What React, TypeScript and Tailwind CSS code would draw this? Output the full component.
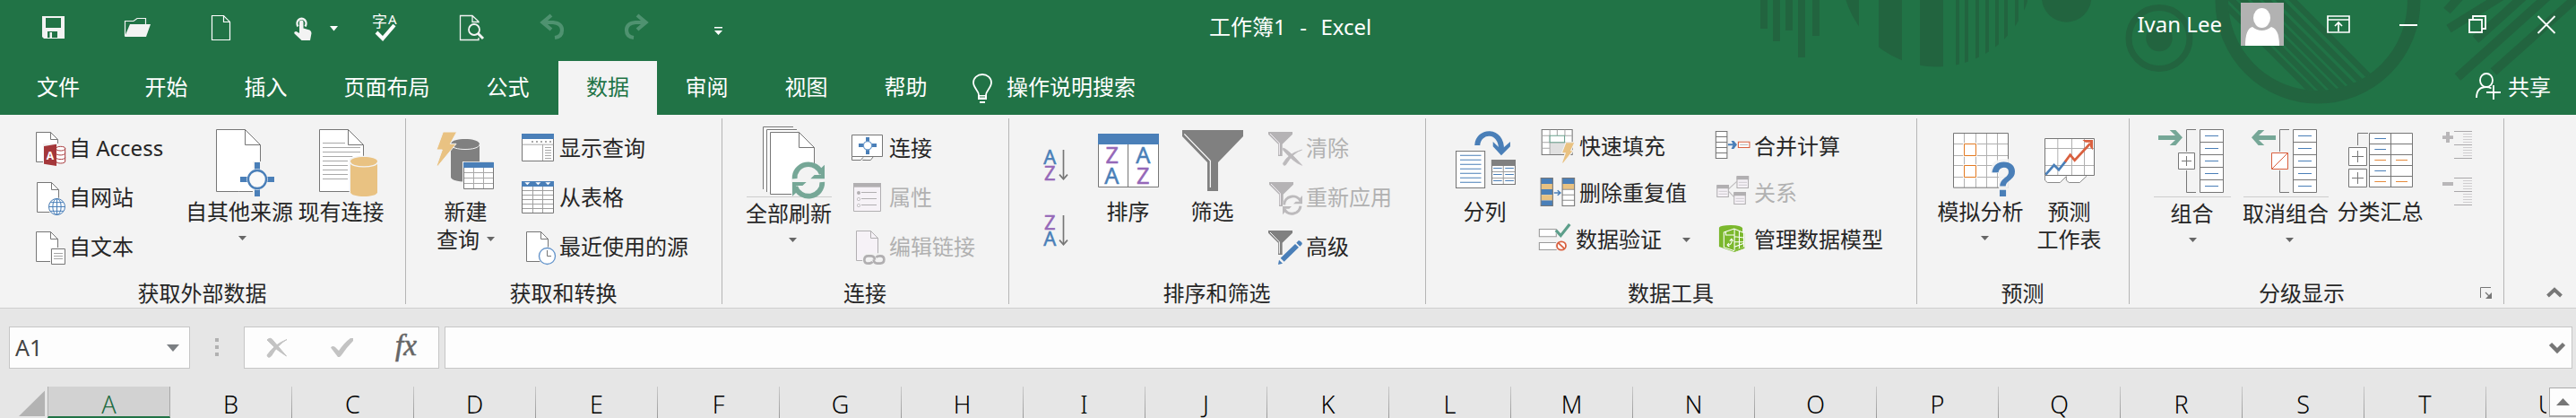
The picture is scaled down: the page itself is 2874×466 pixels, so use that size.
import type { ReactNode } from "react";

const BG = "#f3f3f3";
const GRAY = "#767676";
const BLUE = "#4a7fb8";
const TEAL = "#76a797";
const SAND = "#e9c282";
const RED = "#d9603f";
const DIM = "#b1afb1";

type IconProps = { vb: string; w: number; h: number; c?: string; children: ReactNode };

function Icon({ vb, w, h, c = "", children }: IconProps) {
  return (
    <svg viewBox={vb} width={w} height={h} preserveAspectRatio="none" fill="none" className={`shrink-0 overflow-visible ${c}`}>
      {children}
    </svg>
  );
}

type DocProps = { x: number; y: number; w: number; h: number; f: number; stroke?: string; fill?: string; sw?: number };

function Doc({ x, y, w, h, f, stroke = GRAY, fill = "#fff", sw = 3 }: DocProps) {
  return (
    <g stroke={stroke} strokeWidth={sw}>
      <path d={`M${x} ${y}H${x + w - f}L${x + w} ${y + f}V${y + h}H${x}Z`} fill={fill} />
      <path d={`M${x + w - f} ${y}V${y + f}H${x + w}`} />
    </g>
  );
}

function Caret({ c = "" }: { c?: string }) {
  return (
    <svg width="9" height="5" viewBox="0 0 9 5" className={`shrink-0 ${c}`}>
      <path d="M0 0H9L4.5 5Z" fill="#666" />
    </svg>
  );
}

function Group({ w, label, children, launcher }: { w: string; label: string; children: ReactNode; launcher?: boolean }) {
  return (
    <section className={`${w} flex shrink-0 flex-col`}>
      <div className="flex h-[183px] items-start">{children}</div>
      <div className="flex h-[31px] items-center">
        <div className="flex-1 pr-px text-center leading-[31px]">{label}</div>
        {launcher && (
          <Icon vb="0 0 13 13" w={13} h={13} c="mr-[13px] ml-[6px]">
            <path d="M.5 12V.5H12" stroke={GRAY} />
            <path d="M6 6L10 10" stroke={GRAY} strokeWidth="1.3" />
            <path d="M13 6V13H6Z" fill={GRAY} />
          </Icon>
        )}
      </div>
    </section>
  );
}

function Rule() {
  return <div className="mt-[4px] h-[207px] w-px shrink-0 bg-[#b5b5b5]" />;
}

function Big({ c, icon, label, second, caret, caretClass = "", split }: { c: string; icon: ReactNode; label: string; second?: ReactNode; caret?: boolean; caretClass?: string; split?: boolean }) {
  return (
    <div className={`${c} flex shrink-0 flex-col`}>
      <div className={split ? "mb-[2px] h-[92px] border-b border-[#cdcdcd]" : "h-[92px]"}>{icon}</div>
      <div className="-ml-px text-center leading-[31px] whitespace-nowrap">{label}</div>
      {second && <div className="-ml-px flex items-center justify-center leading-[31px] whitespace-nowrap">{second}</div>}
      {caret && <Caret c={`mx-auto mt-[12px] ${caretClass}`} />}
    </div>
  );
}

function Small({ icon, label, dim, h = "h-[55px] pb-px", gap = "gap-[3px]", caret }: { icon: ReactNode; label: string; dim?: boolean; h?: string; gap?: string; caret?: boolean }) {
  return (
    <div className={`flex items-center whitespace-nowrap ${h} ${gap} ${dim ? "text-[#b1b1b1]" : ""}`}>
      {icon}
      <span className="pb-px">{label}</span>
      {caret && <Caret c="ml-[22px]" />}
    </div>
  );
}

function Funnel({ fill, hi, children, vb }: { fill: string; hi: string; children: ReactNode; vb: string }) {
  return (
    <Icon vb={vb} w={38} h={37}>
      <path d="M885 57H966V65L932 98V138H918V98L885 65Z" fill={fill} />
      <path d="M891 63L922 95V134" stroke={hi} strokeWidth="3" />
      {children}
    </Icon>
  );
}

function Decor() {
  const diag = [0, 15, 29, 42, 55, 68, 81];
  const thin = [2182, 2192, 2204, 2215, 2226, 2236, 2248, 2258];
  return (
    <svg className="absolute top-0 left-[1900px]" width="974" height="128" viewBox="1900 0 974 128" fill="#22643f">
      <clipPath id="disc"><circle cx="2161" cy="-31.8" r="106.4" /></clipPath>
      <clipPath id="hole"><circle cx="2586" cy="1" r="100" /></clipPath>
      <path d="M1964 0h8v32h-8zM1978 0h8v46h-8zM1992 0h8v34h-8zM2006 0h8v64h-8zM2022 0h8v40h-8z" />
      <g clipPath="url(#disc)">
        <path d="M2050 0h24v80h-24zM2096 0h26v80h-26zM2142 0h26v80h-26z" />
        {thin.map((x) => <rect key={x} x={x} y="0" width="4" height="80" />)}
      </g>
      <circle cx="2305.6" cy="-3" r="27.7" />
      <circle cx="2409" cy="42.5" r="34" fill="none" stroke="#22643f" strokeWidth="7" />
      <circle cx="2409" cy="42.5" r="14.7" />
      <circle cx="2586" cy="1" r="107.2" fill="none" stroke="#22643f" strokeWidth="14.5" />
      <g clipPath="url(#hole)" stroke="#22643f" strokeWidth="6.5">
        {diag.map((d) => <path key={d} d={`M${2538 - d} -20l140 140`} />)}
      </g>
      <g stroke="#22643f" strokeWidth="10">
        <path d="M2750 -10L2730 12M2800 -10L2732 32M2822 -10L2762 44M2860 -20L2742 86M2894 -20L2782 80" />
      </g>
    </svg>
  );
}

function QuickAccess() {
  return (
    <div className="flex w-[1349px] shrink-0 items-start pt-[14px] pl-[47px]">
      <Icon vb="47 14 25 34" w={25} h={34}>
        <path fillRule="evenodd" d="M47 18H72V43H49L47 41ZM51 20V31H68V20ZM53 35V42H64V35ZM55.500 36H58V42H55.500Z" fill="#f3f3f3" />
      </Icon>
      <Icon vb="138 14 30 34" w={30} h={34} c="ml-[66px]">
        <path d="M139.500 40V23.500H149L153 20.500H162.500V27" stroke="#f3f3f3" strokeWidth="1.2" />
        <path d="M145 27H168L163 41H139Z" fill="#f3f3f3" />
      </Icon>
      <Icon vb="236 14 22 34" w={22} h={34} c="ml-[68px]">
        <Doc x={236.5} y={17.5} w={20} h={27} f={7} stroke="#fff" fill="none" sw={1.2} />
      </Icon>
      <Icon vb="328 14 20 34" w={20} h={34} c="ml-[70px]">
        <path d="M332.500 29.500A5 5.500 0 1 1 340.500 29.500" stroke="#f3f3f3" strokeWidth="2.400" />
        <path d="M334 37V24.500Q334 22.500 336.300 22.500T338.500 24.500V31.500L345.500 33.500Q347.500 34.500 347.500 37L346 45H336.500L328.500 37.500Q327.500 35 330.500 35Z" fill="#f3f3f3" />
      </Icon>
      <Icon vb="368 14 9 34" w={9} h={34} c="ml-[20px]"><path d="M368 29h9l-4.500 5.500Z" fill="#fff" /></Icon>
      <Icon vb="416 14 27 34" w={27} h={34} c="ml-[39px]">
        <text x="415" y="30" fontSize="17" fill="#fff">字</text>
        <text x="433" y="27" fontSize="15" fill="#fff">A</text>
        <path d="M420 36L427 43L440 28" stroke="#fff" strokeWidth="4" />
      </Icon>
      <Icon vb="513 14 27 34" w={27} h={34} c="ml-[70px]">
        <path d="M534 25.500V24L527 17.500H513.500V44.500H534V42M527 17.500V24.500H534" stroke="#f3f3f3" strokeWidth="1.300" />
        <circle cx="529" cy="33" r="6" stroke="#f3f3f3" strokeWidth="1.800" fill="#217346" />
        <path d="M533 37L539 43" stroke="#f3f3f3" strokeWidth="3" />
      </Icon>
      <Icon vb="603 14 26 34" w={26} h={34} c="ml-[63px]">
        <path d="M615 17L605.500 25L615 33M606 25H617Q627 26 627 33.500Q627 41 619 42" stroke="#4f9270" strokeWidth="4.200" />
      </Icon>
      <Icon vb="697 14 26 34" w={26} h={34} c="ml-[68px]">
        <path d="M711 17L720.500 25L711 33M720 25H709Q699 26 699 33.500Q699 41 707 42" stroke="#4f9270" strokeWidth="4.200" />
      </Icon>
      <Icon vb="797 14 9 34" w={9} h={34} c="ml-[74px]"><path d="M797 30h9v1.500h-9zM797 34h9l-4.500 5Z" fill="#fff" /></Icon>
    </div>
  );
}

function TitleBar() {
  return (
    <div className="relative flex h-[68px] items-start text-white">
      <QuickAccess />
      <div className="pt-[14px] leading-[32px] [word-spacing:1.500px] whitespace-pre">{"工作簿1  -  Excel"}</div>
      <div className="ml-auto flex items-start pr-[23px]">
        <div className="pt-[11px] leading-[32px]">Ivan Lee</div>
        <Icon vb="0 0 48 48" w={48} h={48} c="mt-[3px] ml-[21px]">
          <path d="M0 0H48V48H0Z" fill="#b2b2b2" />
          <ellipse cx="23.500" cy="17" rx="9.500" ry="11" fill="#fff" />
          <path d="M5 48Q5 29 13 27Q18 31 23.500 31Q29 31 34 27Q43 29 43 48Z" fill="#fff" />
        </Icon>
        <Icon vb="2596 14 26 34" w={26} h={34} c="mt-[14px] ml-[48px]">
          <path d="M2597 18H2621V36H2597ZM2597 22H2621M2609 35V25M2605 29L2609 25L2613 29" stroke="#fff" strokeWidth="1.700" />
        </Icon>
        <Icon vb="2677 14 20 34" w={20} h={34} c="mt-[14px] ml-[55px]"><path d="M2677 28h20" stroke="#fff" strokeWidth="2" /></Icon>
        <Icon vb="2754 14 20 34" w={20} h={34} c="mt-[14px] ml-[57px]">
          <path d="M2755 22H2769V36H2755ZM2759 22V18H2773V32H2769" stroke="#fff" strokeWidth="1.800" />
        </Icon>
        <Icon vb="2831 14 20 34" w={20} h={34} c="mt-[14px] ml-[57px]"><path d="M2831.500 18L2850.500 37M2850.500 18L2831.500 37" stroke="#fff" strokeWidth="1.800" /></Icon>
      </div>
    </div>
  );
}

function Tabs() {
  const tabs = ["开始", "插入", "页面布局", "公式", "数据", "审阅", "视图", "帮助"];
  return (
    <div className="relative flex h-[60px] items-stretch leading-[58px] text-white">
      <div className="w-[131px] shrink-0 pr-px text-center">文件</div>
      <div className="flex gap-px">
        {tabs.map((t) => (
          <div key={t} className={t === "数据" ? "bg-[#f3f3f3] px-[31px] text-[#217346]" : "pr-[31.500px] pl-[30.500px]"}>{t}</div>
        ))}
      </div>
      <Icon vb="1085 83 22 33" w={22} h={33} c="mt-[15px] ml-[19px]">
        <path d="M1092 106C1092 101 1086 98 1086 92A10 9 0 0 1 1106 92C1106 98 1100 101 1100 106" stroke="#fff" strokeWidth="1.800" />
        <path d="M1091 106h10v5h-10zM1093 113h6v2h-6z" fill="#fff" />
        <path d="M1093 108h6" stroke="#217346" />
      </Icon>
      <div className="ml-[16px]">操作说明搜索</div>
      <Icon vb="2762 81 28 30" w={28} h={30} c="mt-[13px] ml-auto">
        <ellipse cx="2774" cy="89.500" rx="7" ry="7.500" stroke="#fff" strokeWidth="1.800" />
        <path d="M2763 109Q2763 97 2774 97Q2777 97 2779.500 98.500M2774 103H2790M2782 95V111" stroke="#fff" strokeWidth="1.800" />
      </Icon>
      <div className="mr-[28px] ml-[8px]">共享</div>
    </div>
  );
}

function ExternalData() {
  return (
    <Group w="w-[452px]" label="获取外部数据">
      <div className="ml-[40px] w-[168px] pt-[10px]">
        <Small label="自 Access" icon={
          <Icon vb="120 57 102 111" w={34} h={37}>
            <Doc x={121.5} y={58.5} w={72} h={99} f={24} />
            <path d="M144 96H222V172H144Z" fill={BG} />
            <path d="M188 112C188 104 218 104 218 112V156C218 164 188 164 188 156" fill="#fff" stroke="#a83a3d" strokeWidth="3" />
            <path d="M188 116C196 122 218 122 218 112M188 131C196 137 218 136 218 127M188 145C196 151 218 150 218 142" stroke="#a83a3d" strokeWidth="3" />
            <path d="M147 105L189 98V171L147 164Z" fill="#a4373a" />
            <text x="155" y="149" fontSize="38" fontWeight="700" fill="#fff" textLength="25" lengthAdjust="spacingAndGlyphs">A</text>
          </Icon>
        } />
        <Small label="自网站" icon={
          <Icon vb="120 222 102 111" w={34} h={37}>
            <Doc x={124.5} y={226.500} w={72} h={99} f={24} />
            <circle cx="190.500" cy="307.500" r="31" fill={BG} />
            <g stroke={BLUE} strokeWidth="3"><circle cx="190.500" cy="307.500" r="27" fill="#fff" /><ellipse cx="190.500" cy="307.500" rx="14" ry="27" /><path d="M190.500 280V335M163 307.500H218M168 293H213M168 322H213" /></g>
          </Icon>
        } />
        <Small label="自文本" icon={
          <Icon vb="120 387 102 111" w={34} h={37}>
            <Doc x={121.5} y={391.500} w={72} h={99} f={24} />
            <path d="M168 444H222V502H168Z" fill={BG} />
            <path d="M172.500 448.500H217.500V499.500H172.500Z" fill="#fff" stroke={GRAY} strokeWidth="3" />
            <path d="M180 463.500H210M180 472.500H210M180 481.500H210" stroke="#a5a5a5" strokeWidth="3" />
          </Icon>
        } />
      </div>
      <Big c="w-[117px]" label="自其他来源" caret caretClass="translate-x-[4px]" icon={
        <Icon vb="723 48 198 225" w={66} h={75} c="ml-[33px] translate-y-[16px]">
          <Doc x={724.5} y={49.500} w={147} h={207} f={51} />
          <path d="M846 156h30v36h44v48h-44v36h-30v-10h-46v-54h46z" fill={BG} />
          <path d="M726 200H800L846 156V255H726Z" fill="#fff" />
          <path d="M800 256.500H846" stroke={GRAY} strokeWidth="3" />
          <path d="M852 159h18v114h-18zM804 207h114v18H804z" fill={BLUE} />
          <circle cx="861" cy="216" r="35" fill="#fff" />
          <circle cx="861" cy="216" r="30" fill="#f9f9f9" stroke={BLUE} strokeWidth="7" />
        </Icon>
      } />
      <Big c="ml-px w-[110px]" label="现有连接" icon={
        <Icon vb="1068 48 198 225" w={66} h={75} c="ml-[30px] translate-y-[16px]">
          <Doc x={1069.5} y={49.500} w={147} h={207} f={51} />
          <path d="M1080 94.500H1155M1080 109.500H1206M1080 124.500H1206M1080 139.500H1180M1080 154.500H1164M1080 169.500H1164M1080 184.500H1164M1080 199.500H1164M1080 214.500H1164" stroke="#a8a8a8" strokeWidth="3" />
          <path d="M1169 152C1169 132 1268 132 1268 152V275H1169Z" fill={BG} />
          <path d="M1173 156C1173 136 1263 136 1263 156V259C1263 278 1173 278 1173 259Z" fill={SAND} />
          <path d="M1173 158C1173 179 1263 179 1263 158" stroke={BG} strokeWidth="4" />
        </Icon>
      } />
    </Group>
  );
}

function Transform() {
  return (
    <Group w="w-[352px]" label="获取和转换">
      <Big c="ml-[27px] w-[80px]" label="新建" second={<><span>查询</span><Caret c="ml-[8px]" /></>} icon={
        <Icon vb="114 57 192 192" w={64} h={64} c="ml-[7px] translate-y-[19px]">
          <path d="M162 98C162 75 258 75 258 98V208C258 229 162 229 162 208Z" fill="#808080" />
          <path d="M162 99C162 121 258 121 258 99" stroke={BG} strokeWidth="3" />
          <path d="M136 57H182L160 97H180L119 171H114L133 117H114Z" fill={SAND} stroke={BG} strokeWidth="3" />
          <path d="M201 156H309V252H201Z" fill={BG} />
          <path d="M205.500 160H304.500V247.500H205.500Z" fill="#fff" stroke={GRAY} strokeWidth="3" />
          <path d="M207 193.500H303M207 211.500H303M207 229.500H303M238.500 177V246M271.500 177V246" stroke="#a8a8a8" strokeWidth="3" />
          <path d="M204 159H306V177H204Z" fill={BLUE} />
        </Icon>
      } />
      <div className="ml-[22px] pt-[10px]">
        <Small label="显示查询" icon={
          <Icon vb="396 57 117 111" w={39} h={37}>
            <path d="M397.500 66H502.500V154.500H397.500Z" fill="#fff" stroke={GRAY} strokeWidth="3" />
            <path d="M398 99.500H502M466.500 99V153" stroke="#a8a8a8" strokeWidth="3" />
            <path d="M474 109.500H495M474 118.500H495M474 127.500H495M474 136.500H495M474 145.500H495" stroke="#a8a8a8" strokeWidth="3" />
            <path d="M429 90H495" stroke="#a8a8a8" strokeWidth="6" strokeDasharray="6 9" />
            <path d="M396 63H504V81H396Z" fill={BLUE} />
          </Icon>
        } />
        <Small label="从表格" icon={
          <Icon vb="396 222 117 111" w={39} h={37}>
            <path d="M397.500 225H502.500V328.500H397.500Z" fill="#fff" stroke={GRAY} strokeWidth="3" />
            <path d="M399 253.500H501M399 268.500H501M399 283.500H501M399 298.500H501M399 313.500H501M433.500 240V327M466.500 240V327" stroke="#a0a0a0" strokeWidth="3" />
            <path d="M396 222H504V240H396Z" fill={BLUE} />
            <path d="M406 226h18l-9 9zM442 226h18l-9 9zM475 226h18l-9 9z" fill="#fff" />
          </Icon>
        } />
        <Small label="最近使用的源" icon={
          <Icon vb="396 387 117 111" w={39} h={37}>
            <Doc x={412.5} y={391.500} w={72} h={99} f={24} />
            <circle cx="481.500" cy="472.500" r="31" fill={BG} />
            <circle cx="481.500" cy="472.500" r="27" fill="#fff" stroke="#6394cb" strokeWidth="4" />
            <path d="M481.500 453V472.500H495" stroke={GRAY} strokeWidth="3" />
          </Icon>
        } />
      </div>
    </Group>
  );
}

function Connections() {
  return (
    <Group w="w-[319px]" label="连接">
      <Big c="ml-[27px] w-[95px]" label="全部刷新" split caret caretClass="translate-x-[4px]" icon={
        <Icon vb="153 39 207 234" w={69} h={78} c="ml-[18px] translate-y-[13px]">
          <path d="M154.500 249V40.500H255V249Z" fill="#fff" /><path d="M154.500 249V40.500H255" stroke={GRAY} strokeWidth="3" />
          <path d="M166.500 258V49.500H267V258Z" fill="#fff" /><path d="M166.500 258V49.500H267" stroke={GRAY} strokeWidth="3" />
          <Doc x={178.5} y={58.500} w={147} h={207} f={51} />
          <path d="M249 213Q252 165 306 163H364V272H249Z" fill={BG} />
          <path d="M260 214A46 45 0 0 1 350 198M352 225A46 45 0 0 1 262 240" stroke={TEAL} strokeWidth="17" />
          <path d="M360 167V214H313L326 201H347V179ZM252 272V225H299L286 237H265V260Z" fill={TEAL} />
        </Icon>
      } />
      <div className="ml-[22px] pt-[10px]">
        <Small label="连接" icon={
          <Icon vb="450 57 117 111" w={39} h={37}>
            <path d="M451.500 140V151.500H481L489 142M487 151.500H514L523 140" fill="#fff" stroke={GRAY} strokeWidth="3" />
            <path d="M451.500 67.500H553.500V139.500H451.500Z" fill="#fff" stroke={GRAY} strokeWidth="3" />
            <path d="M498 75h12v57h-12zM474 96h60v12h-60z" fill={BLUE} />
            <circle cx="504" cy="103" r="14" fill="#fff" stroke="#6e9bcb" strokeWidth="4" />
          </Icon>
        } />
        <Small label="属性" dim icon={
          <Icon vb="450 222 117 111" w={39} h={37}>
            <path d="M457.500 230H547.500V322.500H457.500Z" fill="#f6f2f7" stroke={DIM} strokeWidth="3" />
            <path d="M456 228H549V242H456Z" fill={DIM} />
            <circle cx="474" cy="261" r="6" fill={DIM} /><circle cx="474" cy="282" r="5" stroke={DIM} strokeWidth="2" /><circle cx="474" cy="303" r="5" stroke={DIM} strokeWidth="2" />
            <path d="M483 259.500H534M483 280.500H534M483 301.500H534" stroke={DIM} strokeWidth="3" />
          </Icon>
        } />
        <Small label="编辑链接" dim icon={
          <Icon vb="450 387 117 111" w={39} h={37}>
            <Doc x={466.5} y={388.500} w={72} h={99} f={24} stroke={DIM} fill="#f6f2f7" />
            <rect x="486" y="463" width="82" height="42" rx="20" fill={BG} />
            <path d="M520 491Q516 497 506 497Q493 497 493 485Q493 472 506 472H516Q527 473 528 485" stroke={DIM} strokeWidth="8" />
            <path d="M532 477Q536 472 546 472Q559 472 559 484Q559 497 546 497H536Q525 496 524 484" stroke={DIM} strokeWidth="8" />
          </Icon>
        } />
      </div>
    </Group>
  );
}

function SortIcon({ first, second, a, b }: { first: string; second: string; a: string; b: string }) {
  return (
    <Icon vb="133 117 84 102" w={28} h={34}>
      <g fontSize="66" textAnchor="middle" strokeWidth="1.500">
        <text x="155" y="164" fill={a} stroke={a}>{first}</text>
        <text x="155" y="218" fill={b} stroke={b}>{second}</text>
      </g>
      <path d="M200.500 117V212" stroke={GRAY} strokeWidth="5" />
      <path d="M187 200L200.500 215L214 200" stroke={GRAY} strokeWidth="5" />
    </Icon>
  );
}

function SortFilter() {
  const P = "#9568b8";
  return (
    <Group w="w-[464px]" label="排序和筛选">
      <div className="ml-[38px] flex w-[57px] flex-col gap-[39px] pt-[39px]">
        <SortIcon first="A" second="Z" a={BLUE} b={P} />
        <SortIcon first="Z" second="A" a={P} b={BLUE} />
      </div>
      <Big c="w-[76px]" label="排序" icon={
        <Icon vb="315 63 204 180" w={68} h={60} c="ml-[4px] translate-y-[21px]">
          <path d="M316.500 66H517.500V241.500H316.500ZM415.500 90V240" fill="#fff" stroke={GRAY} strokeWidth="3" />
          <path d="M315 63H519V99H315Z" fill={BLUE} />
          <g fontSize="76" textAnchor="middle" strokeWidth="1.500">
            <text x="362" y="161" fill={P} stroke={P}>Z</text><text x="466" y="161" fill={BLUE} stroke={BLUE}>A</text>
            <text x="361" y="230" fill={BLUE} stroke={BLUE}>A</text><text x="466" y="230" fill={P} stroke={P}>Z</text>
          </g>
        </Icon>
      } />
      <Big c="ml-[19px] w-[74px]" label="筛选" icon={
        <Icon vb="597 51 204 204" w={68} h={68} c="ml-[3px] translate-y-[17px]">
          <path d="M597 51H801V72L717 159V255H681V159L597 72Z" fill="#808080" />
          <path d="M604 64L691 154V243" stroke="#fff" strokeWidth="3.500" />
        </Icon>
      } />
      <div className="ml-[25px] pt-[10px]">
        <Small label="清除" dim gap="gap-[4px]" icon={
          <Funnel vb="885 57 114 111" fill="#b5b3b5" hi="#f6f2f7">
            <path d="M938 118Q950 118 994 169M996 118Q955 130 938 166" stroke={BG} strokeWidth="12" />
            <path d="M934 111Q948 112 998 169Q970 160 934 117ZM998 117Q970 124 943 168Q936 172 934 163Q950 130 998 117Z" fill="#bcbabc" stroke="#bcbabc" strokeWidth="2" />
          </Funnel>
        } />
        <Small label="重新应用" dim gap="gap-[4px]" icon={
          <Funnel vb="882 54 114 111" fill="#b5b3b5" hi="#f6f2f7">
            <circle cx="963" cy="134" r="33" fill={BG} />
            <path d="M935 133A29 29 0 0 1 990 121M990 137A29 29 0 0 1 936 148" stroke="#bcbabc" strokeWidth="9" />
            <path d="M996 102V130H966L974 122H988V111ZM930 166V138H960L952 146H938V157Z" fill="#bcbabc" />
          </Funnel>
        } />
        <Small label="高级" gap="gap-[4px]" icon={
          <Funnel vb="885 57 114 111" fill="#808080" hi="#fff">
            <path d="M920 168L996 96" stroke={BG} strokeWidth="22" />
            <path d="M918 171L921 155L933 167ZM926 149L975 102L987 113L938 161ZM979 98L986 91Q990 89 997 97Q1000 101 997 104L991 110Z" fill={BLUE} />
          </Funnel>
        } />
      </div>
    </Group>
  );
}

function DataTools() {
  return (
    <Group w="w-[547px]" label="数据工具">
      <Big c="ml-[26px] w-[80px]" label="分列" icon={
        <Icon vb="95 54 188 192" w={67} h={64} c="ml-[7px] translate-y-[18px]">
          <path d="M163 102C165 50 240 45 238 118" stroke={BLUE} strokeWidth="17" />
          <path d="M212 90L238 116L266 90V106L238 136L212 106Z" fill={BLUE} />
          <path d="M96.500 121.500H186.500V244.500H96.500Z" fill="#fff" stroke={GRAY} strokeWidth="3" />
          <path d="M109 136H175M109 151H175M109 166H175M109 181H175M109 196H175M109 211H175M109 226H175" stroke={BLUE} strokeWidth="3" />
          <path d="M208.500 152H281.500V232.500H208.500Z" fill="#fff" stroke={GRAY} strokeWidth="3" />
          <path d="M244.500 169V231M210 190.500H280M210 211.500H280" stroke="#a0a0a0" strokeWidth="3" />
          <path d="M213 178.500H240M250 178.500H277M213 199.500H240M250 199.500H277M213 220.500H240M250 220.500H277" stroke={BLUE} strokeWidth="3" />
          <path d="M207 150H283V171H207Z" fill="#808080" />
        </Icon>
      } />
      <div className="ml-[20px] w-[197px] pt-[9px]">
        <Small h="h-[52px]" gap="gap-[5px]" label="快速填充" icon={
          <Icon vb="356 51 112 108" w={40} h={36}>
            <path d="M365 49.500H460V133.500H365Z" fill="#fff" stroke={GRAY} strokeWidth="3" />
            <path d="M391 93H440V132H391Z" fill="#e0e0e0" />
            <path d="M390 50V133M437 50V70M413 50V69M366 70H390M437 70H460M366 92H460M366 112H391" stroke="#a8a8a8" strokeWidth="3" />
            <path d="M390 70H436V92H390Z" fill="#fff" stroke="#6ba38f" strokeWidth="3" />
            <path d="M440 92H468L456 119H464L432 162H427L438 128H427Z" fill={SAND} stroke={BG} strokeWidth="3" />
          </Icon>
        } />
        <Small h="h-[52px]" gap="gap-[5px]" label="删除重复值" icon={
          <Icon vb="356 207 112 108" w={40} h={36}>
            <path d="M362 211.500H399V304.500H362ZM429 211.500H467V304.500H429Z" fill="#fff" />
            <path d="M362 212H399V231H362ZM362 249H399V268H362ZM362 286H399V304H362ZM429 212H467V231H429Z" fill={BLUE} />
            <path d="M362 231H399V249H362ZM362 268H399V286H362ZM429 231H467V249H429Z" fill={SAND} />
            <path d="M429 249.500H467M429 267.500H467M429 285.500H467" stroke="#909090" strokeWidth="3" />
            <path d="M362 211.500H399V304.500H362ZM429 211.500H467V304.500H429Z" stroke={GRAY} strokeWidth="3" />
            <path d="M403 261H422M414 253L423 261L414 269" stroke={BLUE} strokeWidth="4" />
          </Icon>
        } />
        <Small h="h-[52px]" gap="gap-[1px]" label="数据验证" caret icon={
          <Icon vb="356 363 112 108" w={40} h={36}>
            <path d="M357 382.500H410V407.500H357ZM357 427.500H415V451.500H357Z" fill="#fff" stroke="#999" strokeWidth="3" />
            <circle cx="426" cy="438" r="20" fill={BG} /><path d="M404 390L425 412L440 390Z" fill={BG} />
            <path d="M409 386L424 404L452 366" stroke="#5c9e8a" strokeWidth="9" />
            <circle cx="426" cy="438" r="14" stroke={RED} strokeWidth="5" fill="#fff" /><path d="M416 428L436 448" stroke={RED} strokeWidth="5" />
          </Icon>
        } />
      </div>
      <div className="pt-[9px]">
        <Small h="h-[52px]" gap="gap-[4px]" label="合并计算" icon={
          <Icon vb="907 51 109 108" w={39} h={36}>
            <path d="M908 55.500H943V145.500H908ZM908 73.500H943M908 91.500H943M908 109.500H943M908 127.500H943" fill="#fff" stroke={GRAY} strokeWidth="3" />
            <path d="M946 97H961L956 87H964L974 100L964 114H956L961 103H946Z" fill={BLUE} />
            <path d="M978 91H1013V109.500H978Z" fill="#fff" stroke={RED} strokeWidth="3" /><path d="M983 100H1008" stroke="#a8a8a8" strokeWidth="2.500" />
          </Icon>
        } />
        <Small h="h-[52px]" gap="gap-[4px]" label="关系" dim icon={
          <Icon vb="907 207 109 108" w={39} h={36}>
            <path d="M948 248L973 223M948 256L964 274" stroke="#bebcbe" strokeWidth="3" />
            <path d="M974 207H1009V244.500H974ZM912 237H947V274.500H912ZM965 261H1000V298.500H965Z" fill="#f6f2f7" stroke={DIM} strokeWidth="3" />
            <path d="M973 204H1011V217H973ZM911 234H949V247H911ZM964 258H1002V271H964Z" fill={DIM} />
            <path d="M979 225.500H1005M979 234.500H1005M917 255.500H943M917 264.500H943M970 279.500H996M970 288.500H996" stroke="#ccc8ce" strokeWidth="3" />
          </Icon>
        } />
        <Small h="h-[52px]" gap="gap-[4px]" label="管理数据模型" icon={
          <Icon vb="907 363 109 108" w={39} h={36}>
            <path d="M918 377Q922 369 955 369Q988 370 991 379V392L997 396V446L966 459L918 441Z" fill="#7bb82d" />
            <path d="M933 393L965 381L995 395V443L966 455L933 443Z" fill="#7bb82d" stroke="#fff" strokeWidth="3" />
            <path d="M966 381V455M966 407L996 411M966 425H996M966 442L996 430M981 389V449M939 390V402H966" stroke="#fff" strokeWidth="3" />
            <path d="M943 435C954 437 959 428 957 418M943 435L949 429M943 435L950 441M951 422L957 415L962 422" stroke="#fff" strokeWidth="3" />
            <path d="M966 455L997 444" stroke="#7bb82d" strokeWidth="4" />
          </Icon>
        } />
      </div>
    </Group>
  );
}

function Forecast() {
  return (
    <Group w="w-[236px]" label="预测">
      <Big c="ml-[22px] w-[98px]" label="模拟分析" caret caretClass="translate-x-[4px]" icon={
        <Icon vb="147 60 213 213" w={71} h={71} c="ml-[18px] translate-y-[20px]">
          <path d="M148.500 61.500H331.500V243.500H148.500Z" fill="#fff" />
          <path d="M184.500 62V243M223.500 62V243M259.500 62V243M295.500 62V243M149 97.500H331M149 136.500H331M149 169.500H331M149 208.500H331" stroke="#b0b0b0" strokeWidth="3" />
          <path d="M148.500 61.500H331.500V243.500H148.500Z" stroke={GRAY} strokeWidth="3" />
          <path d="M184.500 97.500H223.500V136.500H184.500ZM184.500 169.500H223.500V208.500H184.500Z" fill="#fff" stroke="#fff" strokeWidth="8" />
          <path d="M184.500 97.500H223.500V136.500H184.500ZM184.500 169.500H223.500V208.500H184.500Z" stroke="#e27a22" strokeWidth="3" />
          <path d="M273 195Q270 148 318 148H336V200L330 276H300V195Z" fill={BG} opacity=".9" />
          <text x="317" y="273" fontSize="165" fontWeight="700" textAnchor="middle" fill={BLUE} fontFamily="Liberation Sans" textLength="92" lengthAdjust="spacingAndGlyphs">?</text>
        </Icon>
      } />
      <Big c="ml-[10px] w-[80px]" label="预测" second="工作表" icon={
        <Icon vb="453 78 168 150" w={56} h={50} c="ml-[12px] translate-y-[26px]">
          <path d="M454.500 203V219L463 226.500H505L526 206V219L535 226.500H571L594 205" fill="#fff" stroke="#8a8a8a" strokeWidth="3" />
          <path d="M454.500 79.500H619.500V202.500H454.500Z" fill="#fff" />
          <path d="M497.500 80V202M544.500 80V202M586.500 80V202M455 112.500H619M455 169.500H619" stroke="#b0b0b0" strokeWidth="3" />
          <path d="M454.500 79.500H619.500V202.500H454.500Z" stroke={GRAY} strokeWidth="3" />
          <path d="M457 200L485 168L501 184L524 155" stroke={BLUE} strokeWidth="8" />
          <path d="M522 157L539 134L554 152L606 96" stroke={RED} strokeWidth="8" />
          <path d="M580 84H615V118L606 108V92H590Z" fill={RED} />
        </Icon>
      } />
    </Group>
  );
}

function OutlineIcon({ remove, c }: { remove?: boolean; c: string }) {
  return (
    <Icon vb="114 48 219 213" w={73} h={71} c={c}>
      <path d="M240 49.500H208.500V123M208.500 186V259.500H240" stroke={GRAY} strokeWidth="3" />
      <path d="M253.500 49.500H331.500V259.500H253.500ZM253 91.500H331M253 133.500H331M253 175.500H331M253 217.500H331" fill="#fff" stroke={GRAY} strokeWidth="3" />
      <path d="M270 70.500H315M270 112.500H315M270 154.500H315M270 196.500H315M270 238.500H315" stroke={BLUE} strokeWidth="3" />
      <path d="M181.500 127.500H235.500V181.500H181.500Z" fill="#fff" stroke={remove ? RED : GRAY} strokeWidth="3" />
      {remove ? <path d="M183 180L234 129" stroke={RED} strokeWidth="3" /> : <path d="M192 154.500H225M208.500 138V171" stroke={GRAY} strokeWidth="3" />}
      <path transform={remove ? "translate(309 0) scale(-1 1)" : undefined} d="M114 69H171L152 51H172L195 76L172 102H152L171 84H114Z" fill={TEAL} />
    </Icon>
  );
}

function DetailIcon({ minus }: { minus?: boolean }) {
  return (
    <Icon vb="1065 54 99 93" w={33} h={31}>
      <path d={minus ? "M1065 69H1101V81H1065Z" : "M1065 70H1077V57H1089V70H1101V81H1089V93H1077V81H1065Z"} fill="#b8b6b8" />
      <path d="M1104 55.500H1164M1104 100.500H1164M1104 145.500H1164" stroke="#aaa8aa" strokeWidth="3" />
      <path d="M1134 64.500H1164M1134 73.500H1164M1134 82.500H1164M1134 91.500H1164M1134 109.500H1164M1134 118.500H1164M1134 127.500H1164M1134 136.500H1164" stroke="#cfcdcf" strokeWidth="3" />
    </Icon>
  );
}

function Outline() {
  return (
    <Group w="w-[417px]" label="分级显示" launcher>
      <Big c="ml-[27px] w-[86px]" label="组合" split caret icon={<OutlineIcon c="ml-[5px] translate-y-[16px]" />} />
      <Big c="ml-[14px] w-[95px]" label="取消组合" split caret caretClass="translate-x-[4px]" icon={<OutlineIcon remove c="ml-[9px] translate-y-[16px]" />} />
      <Big c="ml-[10px] w-[96px]" label="分类汇总" icon={
        <Icon vb="750 60 216 183" w={72} h={61} c="ml-[12px] translate-y-[20px]">
          <path d="M816 61.500H781.500V102" stroke={GRAY} strokeWidth="3" />
          <path d="M820.500 61.500H964.500V241.500H820.500ZM892.500 61V241M820 97.500H964M820 133.500H964M820 169.500H964M820 205.500H964" fill="#fff" stroke={GRAY} strokeWidth="3" />
          <path d="M838 79.500H876M838 115.500H876M838 187.500H876" stroke={BLUE} strokeWidth="3" />
          <path d="M838 151.500H876M909 151.500H948M838 223.500H876M909 223.500H948" stroke="#e58a3c" strokeWidth="3" />
          <path d="M751.500 109.500H811.500V169.500H751.500ZM751.500 181.500H811.500V241.500H751.500Z" fill="#fff" stroke={GRAY} strokeWidth="3" />
          <path d="M762 139.500H801M781.500 120V159M762 211.500H801M781.500 192V231" stroke={GRAY} strokeWidth="3" />
        </Icon>
      } />
      <div className="ml-[21px] flex flex-col gap-[21px] pt-[18px]">
        <DetailIcon />
        <DetailIcon minus />
      </div>
    </Group>
  );
}

function Ribbon() {
  return (
    <div className="flex h-[216px] items-start border-b border-[#cfcfcf] bg-[#f3f3f3] text-[#262626]">
      <ExternalData /><Rule />
      <Transform /><Rule />
      <Connections /><Rule />
      <SortFilter /><Rule />
      <DataTools /><Rule />
      <Forecast /><Rule />
      <Outline /><Rule />
      <Icon vb="0 0 18 12" w={18} h={12} c="mt-[192px] ml-[47px]"><path d="M1.500 10L9 3L16.500 10" stroke={GRAY} strokeWidth="4" /></Icon>
    </div>
  );
}

function FormulaBar() {
  return (
    <div className="flex h-[87px] items-start pt-[20px] pl-[10px]">
      <div className="flex h-[47px] w-[202px] items-center justify-between border border-[#c6c6c6] bg-[#fdfdfd] pr-[11px] pl-[6px] text-[25px] text-[#444]">
        <span>A1</span>
        <Icon vb="0 0 14 8" w={14} h={8}><path d="M0 0H14L7 8Z" fill="#7b7f83" /></Icon>
      </div>
      <div className="mt-[13px] ml-[28px] flex flex-col gap-[4px]">
        <i className="size-[4px] bg-[#b1b1b1]" /><i className="size-[4px] bg-[#b1b1b1]" /><i className="size-[4px] bg-[#b1b1b1]" />
      </div>
      <div className="ml-[28px] flex h-[47px] w-[218px] border border-[#c6c6c6] bg-[#fdfdfd]">
        <Icon vb="298 377 22 22" w={22} h={22} c="mt-[12px] ml-[25px]">
          <path d="M298 379Q302 375 305 380L319.500 397Q309 391 298 379ZM320 378.500Q310 384 302.500 397Q299 400 298 396Q306 384 320 378.500Z" fill="#c3c3c3" stroke="#c3c3c3" />
        </Icon>
        <Icon vb="369 377 25 22" w={25} h={22} c="mt-[12px] ml-[49px]">
          <path d="M369 387.500Q371 385 374 387L378 391Q384 382 391 377H394V380Q387 387 381 396L379 398H377Z" fill="#c3c3c3" />
        </Icon>
        <span className="ml-[47px] font-[Liberation_Serif] text-[33px] leading-[41px] tracking-[0px] text-[#666] italic [-webkit-text-stroke:0.6px_#666]">fx</span>
      </div>
      <div className="ml-[6px] flex h-[47px] w-[2374px] items-center justify-end border border-[#c6c6c6] bg-[#fdfdfd] pr-[7px]">
        <Icon vb="0 0 18 12" w={18} h={12}><path d="M1.500 1.500L9 9L16.500 1.500" stroke={GRAY} strokeWidth="4.500" /></Icon>
      </div>
    </div>
  );
}

function ColumnHeaders() {
  return (
    <div className="relative flex h-[35px] overflow-hidden text-[27px] leading-[40px] text-black">
      <Icon vb="21 431 32 35" w={32} h={35} c="ml-[21px]"><path d="M50 435.500V464H21Z" fill="#b3b3b3" /></Icon>
      <div className="w-[137px] shrink-0 border-r border-b-2 border-l border-r-[#a8a8a8] border-b-[#217346] border-l-[#b0b0b0] bg-[#d2d2d2] text-center font-light text-[#1f6b41]">A</div>
      {"BCDEFGHIJKLMNOPQRSTU".split("").map((l) => (
        <div key={l} className="flex w-[136px] shrink-0">
          <div className="flex-1 text-center font-light">{l}</div>
          <div className="w-px bg-linear-to-b from-[#c9c9c9] to-[#999]" />
        </div>
      ))}
      <div className="absolute top-0 right-0 flex h-[35px] w-[33px] justify-end bg-[#e6e6e6]">
        <div className="mt-px flex h-[33px] w-[30px] items-center justify-center border border-r-0 border-b-2 border-[#ababab] bg-[#fdfdfd]">
          <Icon vb="0 0 15 8" w={15} h={8}><path d="M0 8H15L7.500 0Z" fill={GRAY} /></Icon>
        </div>
      </div>
    </div>
  );
}

export default function App() {
  return (
    <div className="h-[466px] w-[2874px] overflow-hidden bg-[#e6e6e6] font-['Noto_Sans','Noto_Sans_CJK_SC',sans-serif] text-[24px]">
      <header className="relative h-[128px] bg-[#217346]">
        <Decor />
        <TitleBar />
        <Tabs />
      </header>
      <Ribbon />
      <FormulaBar />
      <ColumnHeaders />
    </div>
  );
}
